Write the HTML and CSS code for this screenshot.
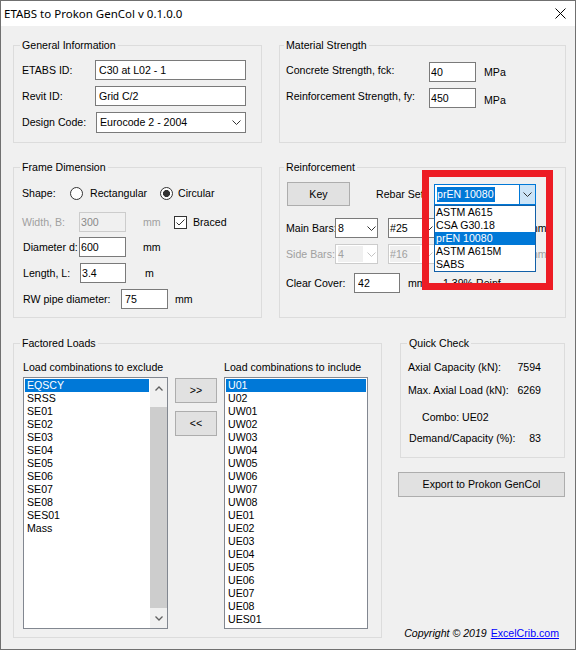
FILE: index.html
```html
<!DOCTYPE html>
<html lang="en">
  <head>
    <meta charset="UTF-8" />
    <meta name="viewport" content="width=device-width, initial-scale=1.0" />
    <title>ETABS to Prokon GenCol v 0.1.0.0</title>
    <link rel="stylesheet" href="styles.css">
  </head>
  <body>
    <div class="window">
      <div class="titlebar">
        <span class="title">ETABS to Prokon GenCol v 0.1.0.0</span>
        <svg class="close" width="11" height="11" viewBox="0 0 11 11">
          <path d="M0.5 0.5L10.5 10.5M10.5 0.5L0.5 10.5" />
        </svg>
      </div>

      <div class="client">
        <!-- top band -->
        <div class="band band-top">
          <fieldset class="group general">
            <legend>General Information</legend>
            <div class="line first">
              <label class="cap">ETABS ID:</label>
              <input class="txt w151 pad2" value="C30 at L02 - 1">
            </div>
            <div class="line">
              <label class="cap">Revit ID:</label>
              <input class="txt w151 pad2" value="Grid C/2">
            </div>
            <div class="line">
              <label class="cap">Design Code:</label>
              <div class="combo code">
                <span>Eurocode 2 - 2004</span>
                <svg class="chev" width="9" height="5" viewBox="0 0 9 5"><path d="M0.5 0.5L4.5 4.5L8.5 0.5" /></svg>
              </div>
            </div>
          </fieldset>

          <fieldset class="group material">
            <legend>Material Strength</legend>
            <div class="line first">
              <label class="cap">Concrete Strength, fck:</label>
              <input class="txt w47" value="40">
              <span class="unit">MPa</span>
            </div>
            <div class="line">
              <label class="cap">Reinforcement Strength, fy:</label>
              <input class="txt w47" value="450">
              <span class="unit low">MPa</span>
            </div>
          </fieldset>
        </div>

        <!-- middle band -->
        <div class="band band-mid">
          <fieldset class="group frame">
            <legend>Frame Dimension</legend>
            <div class="line shape">
              <span class="cap">Shape:</span>
              <span class="opt rect"><span class="radio"></span>Rectangular</span>
              <span class="opt circ"><span class="radio on"></span>Circular</span>
            </div>
            <div class="line width">
              <label class="cap dim">Width, B:</label>
              <input class="txt w47" value="300" disabled>
              <span class="unit dim">mm</span>
              <span class="check">
                <svg width="11" height="11" viewBox="0 0 11 11"><path d="M1.5 5.5L4 8L9.5 2.5" /></svg>
              </span>
              <span class="braced">Braced</span>
            </div>
            <div class="line dia">
              <label class="cap">Diameter d:</label>
              <input class="txt w47" value="600">
              <span class="unit">mm</span>
            </div>
            <div class="line len">
              <label class="cap">Length, L:</label>
              <input class="txt w46" value="3.4">
              <span class="unit">m</span>
            </div>
            <div class="line rw">
              <label class="cap">RW pipe diameter:</label>
              <input class="txt w47 pad2" value="75">
              <span class="unit">mm</span>
            </div>
          </fieldset>

          <fieldset class="group reinf">
            <legend>Reinforcement</legend>
            <div class="line keyrow">
              <button class="btn key">Key</button>
              <span class="cap rebar-cap">Rebar Set:</span>
              <div class="combo rebar">
                <span class="picked">prEN 10080</span>
                <span class="dd-btn">
                  <svg class="chev" width="9" height="5" viewBox="0 0 9 5"><path d="M0.5 0.5L4.5 4.5L8.5 0.5" /></svg>
                </span>
                <div class="ddlist">
                  <div>ASTM A615</div>
                  <div>CSA G30.18</div>
                  <div class="sel">prEN 10080</div>
                  <div>ASTM A615M</div>
                  <div>SABS</div>
                </div>
                <div class="callout"></div>
              </div>
            </div>
            <div class="line bars">
              <span class="cap">Main Bars:</span>
              <div class="combo small count">
                <span>8</span>
                <svg class="chev" width="9" height="5" viewBox="0 0 9 5"><path d="M0.5 0.5L4.5 4.5L8.5 0.5" /></svg>
              </div>
              <div class="combo small size">
                <span>#25</span>
                <svg class="chev" width="9" height="5" viewBox="0 0 9 5"><path d="M0.5 0.5L4.5 4.5L8.5 0.5" /></svg>
              </div>
              <span class="unit far">mm</span>
            </div>
            <div class="line bars side-bars">
              <span class="cap dim">Side Bars:</span>
              <div class="combo small count off">
                <span class="val">4</span>
                <svg class="chev" width="9" height="5" viewBox="0 0 9 5"><path d="M0.5 0.5L4.5 4.5L8.5 0.5" /></svg>
              </div>
              <div class="combo small size off">
                <span class="val">#16</span>
                <svg class="chev" width="9" height="5" viewBox="0 0 9 5"><path d="M0.5 0.5L4.5 4.5L8.5 0.5" /></svg>
              </div>
              <span class="unit far dim">mm</span>
            </div>
            <div class="line cover">
              <label class="cap">Clear Cover:</label>
              <input class="txt w46 pad2" value="42">
              <span class="unit">mm</span>
              <span>1.39% Reinf</span>
            </div>
          </fieldset>
        </div>

        <!-- bottom band -->
        <div class="band band-bottom">
          <fieldset class="group loads">
            <legend>Factored Loads</legend>
            <div class="lists">
              <div class="listcol">
                <div class="listcap">Load combinations to exclude</div>
                <div class="listbox">
                  <div class="items">
                    <div class="item sel">EQSCY</div>
                    <div class="item">SRSS</div>
                    <div class="item">SE01</div>
                    <div class="item">SE02</div>
                    <div class="item">SE03</div>
                    <div class="item">SE04</div>
                    <div class="item">SE05</div>
                    <div class="item">SE06</div>
                    <div class="item">SE07</div>
                    <div class="item">SE08</div>
                    <div class="item">SES01</div>
                    <div class="item">Mass</div>
                  </div>
                  <div class="vscroll">
                    <div class="vs-top">
                      <svg width="8" height="5" viewBox="0 0 8 5"><path d="M0.5 4.5L4 1L7.5 4.5" /></svg>
                    </div>
                    <div class="vs-thumb"></div>
                    <div class="vs-bottom">
                      <svg width="8" height="5" viewBox="0 0 8 5"><path d="M0.5 0.5L4 4L7.5 0.5" /></svg>
                    </div>
                  </div>
                </div>
              </div>

              <div class="movers">
                <button class="btn move">&gt;&gt;</button>
                <button class="btn move">&lt;&lt;</button>
              </div>

              <div class="listcol right">
                <div class="listcap">Load combinations to include</div>
                <div class="listbox">
                  <div class="items">
                    <div class="item sel">U01</div>
                    <div class="item">U02</div>
                    <div class="item">UW01</div>
                    <div class="item">UW02</div>
                    <div class="item">UW03</div>
                    <div class="item">UW04</div>
                    <div class="item">UW05</div>
                    <div class="item">UW06</div>
                    <div class="item">UW07</div>
                    <div class="item">UW08</div>
                    <div class="item">UE01</div>
                    <div class="item">UE02</div>
                    <div class="item">UE03</div>
                    <div class="item">UE04</div>
                    <div class="item">UE05</div>
                    <div class="item">UE06</div>
                    <div class="item">UE07</div>
                    <div class="item">UE08</div>
                    <div class="item">UES01</div>
                  </div>
                </div>
              </div>
            </div>
          </fieldset>

          <div class="side">
            <fieldset class="group quick">
              <legend>Quick Check</legend>
              <div class="qc q-cap"><span>Axial Capacity (kN):</span><span>7594</span></div>
              <div class="qc q-load"><span>Max. Axial Load (kN):</span><span>6269</span></div>
              <div class="qc q-combo"><span>Combo: UE02</span></div>
              <div class="qc q-ratio"><span>Demand/Capacity (%):</span><span>83</span></div>
            </fieldset>
            <button class="btn export">Export to Prokon GenCol</button>
            <div class="copyright"><i>Copyright © 2019</i> <a href="#">ExcelCrib.com</a></div>
          </div>
        </div>
      </div>
    </div>
  </body>
</html>
```

FILE: styles.css
```css
* {
  box-sizing: border-box;
}

body {
  margin: 0;
  background: #ffffff;
  font-family: "Liberation Sans", Arial, sans-serif;
  font-size: 10.6px;
  line-height: 13px;
  color: #000;
}

.window {
  width: 576px;
  height: 650px;
  border: 1px solid #707070;
  background: #f0f0f0;
  overflow: hidden;
}

.titlebar {
  height: 25px;
  background: #fff;
  display: flex;
  align-items: center;
  justify-content: space-between;
  padding: 0 9px 0 3px;
}

.title {
  font-family: "Noto Sans", "Liberation Sans", sans-serif;
  font-size: 11.5px;
}

.close {
  stroke: #000;
  stroke-width: 1;
  fill: none;
}

.client {
  padding: 13px 9px 0 12px;
}

.band {
  display: flex;
  align-items: flex-start;
}

.band-top {
  gap: 17px;
}

.band-mid {
  gap: 17px;
  margin-top: 18px;
}

.band-bottom {
  gap: 16px;
  margin-top: 19px;
}

/* group boxes: legend sits 8px in from the border */
.group {
  margin: 0;
  padding: 0;
  border: 1px solid #dcdcdc;
  min-width: 0;
}

.group legend {
  padding: 0 2px;
  line-height: 13px;
}

.general {
  width: 249px;
  height: 104px;
  padding-left: 8px;
}

.general legend,
.frame legend {
  margin-left: -2px;
}

.material {
  width: 287px;
  height: 104px;
  padding-left: 6px;
}

.material legend,
.reinf legend {
  margin-left: -2px;
}

.frame {
  width: 249px;
  height: 157px;
  padding-left: 8px;
}

.reinf {
  width: 287px;
  height: 157px;
  padding-left: 6px;
}

.loads {
  width: 369px;
  height: 301px;
  padding-left: 9px;
}

.loads legend {
  margin-left: -3px;
}

/* rows */
.line {
  display: flex;
  align-items: center;
  height: 20px;
  margin-top: 6px;
}

.cap {
  flex: none;
  white-space: nowrap;
}

.unit {
  flex: none;
  white-space: nowrap;
}

.dim {
  color: #a0a0a0;
}

.general .line.first {
  margin-top: 8px;
}

.general .cap {
  width: 73px;
}

.material .line.first {
  margin-top: 10px;
}

.material .cap {
  width: 143px;
  margin-bottom: 4px;
}

.material .unit {
  margin-left: 8px;
}

.material .unit.low {
  margin-top: 4px;
}

/* inputs */
.txt {
  height: 20px;
  margin: 0;
  padding: 0 0 0 1px;
  border: 1px solid #7a7a7a;
  background: #fff;
  font: inherit;
  color: #000;
  outline: none;
}

.txt.pad2 {
  padding-left: 3px;
}

.txt:disabled {
  border-color: #cccccc;
  background: #f0f0f0;
  color: #8a8a8a;
}

.w151 {
  width: 151px;
}

.w47 {
  width: 47px;
}

.w46 {
  width: 46px;
}

/* combos */
.combo {
  display: flex;
  align-items: center;
  justify-content: space-between;
  height: 20px;
  border: 1px solid #7a7a7a;
  background: #fff;
  white-space: nowrap;
}

.chev {
  fill: none;
  stroke: #333;
  stroke-width: 1;
  flex: none;
}

.combo.code {
  width: 150px;
  height: 21px;
  margin-left: 1px;
  padding: 0 4px 0 3px;
}

.combo.small {
  padding: 0 1px 0 2px;
}

.combo.count {
  width: 43px;
}

.combo.size {
  width: 47px;
  margin-left: 10px;
  padding-left: 1px;
}

.combo.off {
  border-color: #cccccc;
  color: #a0a0a0;
}

.combo.off .val {
  background: #f0f0f0;
  height: 16px;
  line-height: 16px;
  flex: 1;
  margin-right: 4px;
}

.combo.off .chev {
  stroke: #c4c4c4;
}

/* frame dimension */
.frame .shape {
  height: 13px;
  margin-top: 13px;
}

.frame .shape .cap {
  width: 48px;
}

.opt {
  display: flex;
  align-items: center;
  white-space: nowrap;
}

.opt.rect {
  width: 90px;
  gap: 7px;
}

.opt.circ {
  gap: 5px;
}

.radio {
  width: 13px;
  height: 13px;
  border: 1px solid #333;
  border-radius: 50%;
  background: #fff;
  flex: none;
}

.radio.on {
  background: radial-gradient(circle, #333 0 3.2px, #fff 3.8px);
}

.frame .width {
  margin-top: 12px;
}

.frame .width .cap {
  width: 57px;
}

.frame .width .unit {
  margin-left: 17px;
  width: 31px;
}

.check {
  width: 13px;
  height: 13px;
  border: 1px solid #333;
  background: #fff;
  display: flex;
  flex: none;
}

.check svg {
  fill: none;
  stroke: #333;
  stroke-width: 1;
}

.braced {
  margin-left: 6px;
}

.frame .dia {
  margin-top: 5px;
  padding-left: 1px;
}

.frame .dia .cap {
  width: 56px;
}

.frame .dia .unit {
  margin-left: 17px;
}

.frame .len {
  padding-left: 1px;
}

.frame .len .cap {
  width: 57px;
}

.frame .len .unit {
  margin-left: 19px;
}

.frame .rw {
  padding-left: 1px;
}

.frame .rw .cap {
  width: 98px;
}

.frame .rw .unit {
  margin-left: 7px;
}

/* reinforcement */
.btn {
  margin: 0;
  padding: 0;
  border: 1px solid #adadad;
  background: #e1e1e1;
  font: inherit;
  color: #000;
}

.reinf .keyrow {
  height: 24px;
  margin-top: 8px;
}

.btn.key {
  width: 63px;
  height: 24px;
  margin-left: 1px;
}

.rebar-cap {
  margin-left: 26px;
  width: 58px;
}

.combo.rebar {
  position: relative;
  width: 102px;
  height: 21px;
  border-color: #0078d7;
  padding-left: 2px;
}

.picked {
  background: #0078d7;
  color: #fff;
  line-height: 15px;
  padding: 0 1px 0 0;
}

.dd-btn {
  width: 16px;
  height: 100%;
  background: #cce4f7;
  border-left: 1px solid #0078d7;
  display: flex;
  align-items: center;
  justify-content: center;
}

.ddlist {
  position: absolute;
  left: -1px;
  top: 20px;
  width: 102px;
  border: 1px solid #1260a8;
  background: #fff;
  z-index: 3;
}

.ddlist div {
  height: 13px;
  line-height: 13px;
  padding-left: 1px;
  color: #000;
}

.ddlist div.sel {
  background: #0078d7;
  color: #fff;
}

.callout {
  position: absolute;
  left: -13px;
  top: -15px;
  width: 131px;
  height: 120px;
  border: 7px solid #ed1c24;
  z-index: 4;
}

.reinf .bars {
  margin-top: 12px;
}

.reinf .bars .cap {
  width: 49px;
}

.reinf .side-bars {
  margin-top: 6px;
}

.unit.far {
  margin-left: 94px;
}

.reinf .cover {
  margin-top: 9px;
}

.reinf .cover .cap {
  width: 68px;
}

.reinf .cover .unit {
  margin-left: 8px;
  width: 35px;
}

/* factored loads */
.lists {
  display: flex;
  align-items: flex-start;
}

.listcol {
  width: 145px;
}

.listcol.right {
  width: 144px;
  margin-left: 7px;
}

.listcap {
  margin-top: 11px;
  white-space: nowrap;
}

.listbox {
  display: flex;
  height: 252px;
  margin-top: 3px;
  border: 1px solid #828790;
  background: #fff;
}

.items {
  flex: 1;
  padding: 1px;
}

.item {
  height: 13px;
  line-height: 13px;
  padding-left: 2px;
  white-space: nowrap;
}

.item.sel {
  background: #0078d7;
  color: #fff;
}

.vscroll {
  width: 17px;
  display: flex;
  flex-direction: column;
  background: #f0f0f0;
}

.vscroll svg {
  fill: none;
  stroke: #606060;
  stroke-width: 1.3;
}

.vs-top {
  height: 29px;
  display: flex;
  justify-content: center;
  padding-top: 8px;
}

.vs-thumb {
  flex: 1;
  background: #cdcdcd;
}

.vs-bottom {
  height: 20px;
  display: flex;
  align-items: center;
  justify-content: center;
}

.movers {
  display: flex;
  flex-direction: column;
  gap: 8px;
  margin-top: 28px;
  margin-left: 7px;
}

.btn.move {
  width: 42px;
  height: 25px;
}

/* quick check */
.side {
  width: 168px;
  display: flex;
  flex-direction: column;
}

.quick {
  width: 165px;
  height: 121px;
  margin-left: 2px;
  padding: 0 23px 0 7px;
}

.quick legend {
  margin-left: -1px;
}

.qc {
  display: flex;
  justify-content: space-between;
  white-space: nowrap;
  margin-top: 10px;
}

.qc.q-cap {
  margin-top: 11px;
}

.qc.q-combo {
  margin-top: 14px;
  padding-left: 14px;
}

.qc.q-ratio {
  margin-top: 8px;
  padding-left: 1px;
}

.btn.export {
  width: 167px;
  height: 25px;
  margin-top: 14px;
}

.copyright {
  margin-top: 130px;
  text-align: right;
  padding-right: 7px;
  white-space: nowrap;
}

.copyright a {
  color: #0000ff;
  text-decoration: underline;
  margin-left: 1px;
}
```
